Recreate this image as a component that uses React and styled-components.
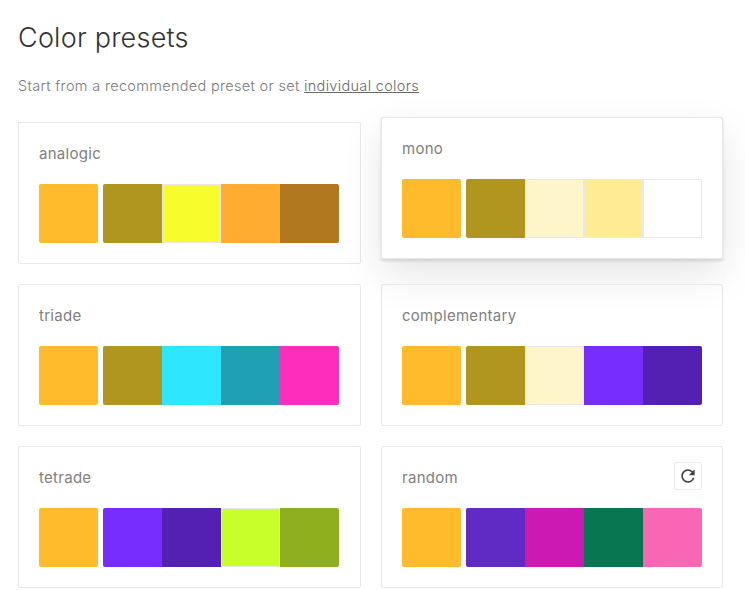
import React from "react";
import styled, {createGlobalStyle} from "styled-components";
import {MdRefresh} from "react-icons/md";

const GlobalStyle = createGlobalStyle`
  html, body {
    margin: 0;
    padding: 0;
    background: #ffffff;
    overflow: hidden;
  }
  body {
    font-family: "Inter", "Liberation Sans", sans-serif;
  }
  * {
    box-sizing: border-box;
  }
`;

const PRESETS = [
    {name: "analogic", colors: ["#ffbb2c", "#b0951e", "#f7fd2a", "#ffac30", "#b1781f"], outlined: [2]},
    {name: "mono", lifted: true, colors: ["#ffbb2c", "#b0951e", "#fff5ca", "#ffeb94", "#ffffff"], outlined: [2, 3, 4]},
    {name: "triade", colors: ["#ffbb2c", "#b0951e", "#2de6ff", "#1fa1b3", "#ff2dbb"]},
    {name: "complementary", colors: ["#ffbb2c", "#b0951e", "#fff5ca", "#782dff", "#5220b3"], outlined: [2]},
    {name: "tetrade", colors: ["#ffbb2c", "#782dff", "#5220b3", "#c8ff2b", "#8fb01e"], outlined: [3]},
    {name: "random", refresh: true, colors: ["#ffbb2c", "#5f2bc4", "#cc19b3", "#087650", "#f966b4"]},
];

function PresetCard({preset}) {
    const [base, ...rest] = preset.colors;
    const outlined = preset.outlined || [];
    return (
        <Card $lifted={preset.lifted}>
            <CardTitle>{preset.name}</CardTitle>
            {preset.refresh && (
                <RefreshButton type="button">
                    <MdRefresh size={20}/>
                </RefreshButton>
            )}
            <Palette>
                <BaseSwatch $color={base}/>
                <SwatchGroup>
                    {rest.map((color, i) => (
                        <Swatch key={i} $color={color} $outlined={outlined.includes(i + 1)}/>
                    ))}
                </SwatchGroup>
            </Palette>
        </Card>
    );
}

export default function App() {
    return (
        <Page>
            <GlobalStyle/>
            <Heading>Color presets</Heading>
            <Intro>
                Start from a recommended preset or set <IntroLink>individual colors</IntroLink>
            </Intro>
            <Grid>
                {PRESETS.map((preset) => (
                    <PresetCard key={preset.name} preset={preset}/>
                ))}
            </Grid>
        </Page>
    );
}

const Page = styled.div`
  width: 745px;
  height: 590px;
  padding: 19px 22px 0 18px;
  overflow: hidden;
`;

const Heading = styled.h1`
  margin: 0;
  height: 38px;
  font-size: 27px;
  line-height: 38px;
  font-weight: 300;
  letter-spacing: 0.23px;
  color: #333333;
`;

const Intro = styled.p`
  margin: 19px 0 0 0;
  height: 20px;
  font-size: 14.5px;
  font-weight: 300;
  line-height: 20px;
  letter-spacing: 0.32px;
  color: #7a7a7a;
`;

const IntroLink = styled.span`
  color: #6a6a6a;
  text-decoration: underline;
`;

const Grid = styled.div`
  margin-top: 26px;
  display: grid;
  grid-template-columns: 343px 342px;
  grid-auto-rows: 142px;
  column-gap: 20px;
  row-gap: 20px;
`;

const Card = styled.div`
  position: relative;
  height: 142px;
  padding: 20px;
  background: ${(p) => (p.$lifted ? "#ffffff" : "transparent")};
  border: 1px solid #e8e8e8;
  border-radius: 2px;
  ${(p) => p.$lifted && `
    transform: translateY(-5px);
    box-shadow: 0 2px 3px rgba(0, 0, 0, 0.12), 0 16px 40px rgba(0, 0, 0, 0.1);
  `}
`;

const CardTitle = styled.div`
  height: 21px;
  font-size: 15px;
  line-height: 21px;
  letter-spacing: 0.28px;
  color: #808080;
`;

const RefreshButton = styled.button`
  position: absolute;
  top: 15px;
  right: 20px;
  width: 28px;
  height: 28px;
  padding: 0;
  display: flex;
  align-items: center;
  justify-content: center;
  background: #ffffff;
  border: 1px solid #ececec;
  border-radius: 2px;
  color: #444444;
`;

const Palette = styled.div`
  margin-top: 20px;
  display: flex;
  gap: 5px;
`;

const BaseSwatch = styled.div`
  width: 59px;
  height: 59px;
  border-radius: 2px;
  background: ${(p) => p.$color};
`;

const SwatchGroup = styled.div`
  display: flex;
  border-radius: 2px;
  overflow: hidden;
`;

const Swatch = styled.div`
  width: 59px;
  height: 59px;
  background: ${(p) => p.$color};
  border: ${(p) => (p.$outlined ? "1px solid #e8e8e8" : "none")};
`;
